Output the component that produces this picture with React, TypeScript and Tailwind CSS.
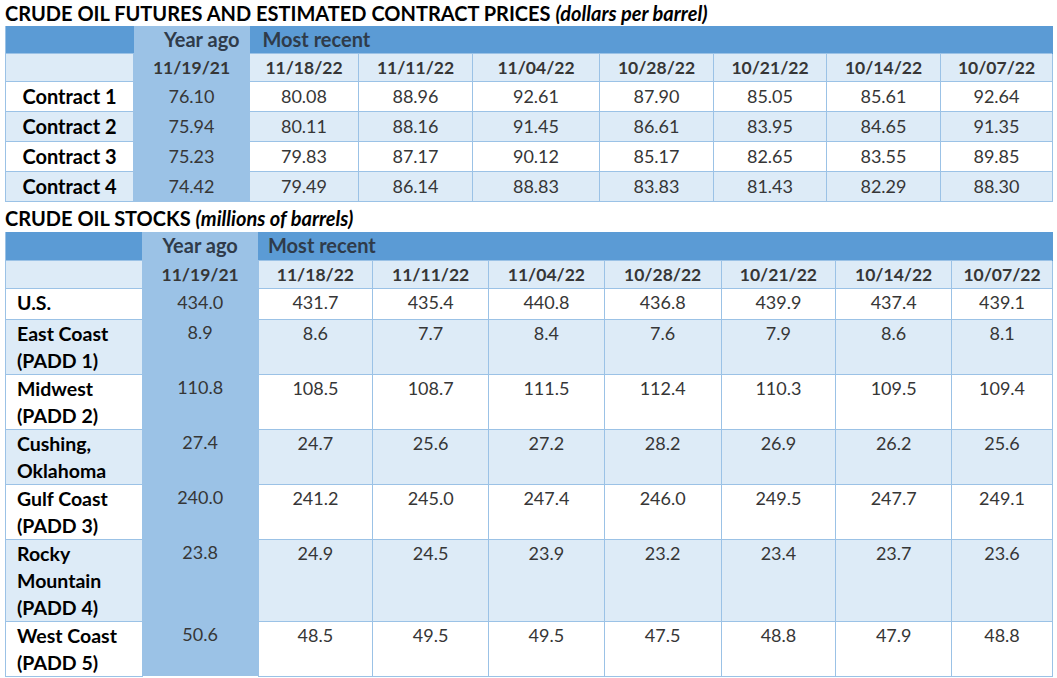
const futuresDates = ["11/18/22", "11/11/22", "11/04/22", "10/28/22", "10/21/22", "10/14/22", "10/07/22"];

const contracts = [
  { label: "Contract 1", ago: "76.10", values: ["80.08", "88.96", "92.61", "87.90", "85.05", "85.61", "92.64"] },
  { label: "Contract 2", ago: "75.94", values: ["80.11", "88.16", "91.45", "86.61", "83.95", "84.65", "91.35"] },
  { label: "Contract 3", ago: "75.23", values: ["79.83", "87.17", "90.12", "85.17", "82.65", "83.55", "89.85"] },
  { label: "Contract 4", ago: "74.42", values: ["79.49", "86.14", "88.83", "83.83", "81.43", "82.29", "88.30"] },
];

const stocks = [
  { label: ["U.S."], h: "h-[31px]", ago: "434.0", values: ["431.7", "435.4", "440.8", "436.8", "439.9", "437.4", "439.1"] },
  { label: ["East Coast", "(PADD 1)"], h: "h-[54px]", ago: "8.9", values: ["8.6", "7.7", "8.4", "7.6", "7.9", "8.6", "8.1"] },
  { label: ["Midwest", "(PADD 2)"], h: "h-[54px]", ago: "110.8", values: ["108.5", "108.7", "111.5", "112.4", "110.3", "109.5", "109.4"] },
  { label: ["Cushing,", "Oklahoma"], h: "h-[54px]", ago: "27.4", values: ["24.7", "25.6", "27.2", "28.2", "26.9", "26.2", "25.6"] },
  { label: ["Gulf Coast", "(PADD 3)"], h: "h-[54px]", ago: "240.0", values: ["241.2", "245.0", "247.4", "246.0", "249.5", "247.7", "249.1"] },
  { label: ["Rocky", "Mountain", "(PADD 4)"], h: "h-[81px]", ago: "23.8", values: ["24.9", "24.5", "23.9", "23.2", "23.4", "23.7", "23.6"] },
  { label: ["West Coast", "(PADD 5)"], h: "h-[54px]", ago: "50.6", values: ["48.5", "49.5", "49.5", "47.5", "48.8", "47.9", "48.8"] },
];

const futuresCols = ["w-[128px]", "w-[116px]", "w-[109px]", "w-[114px]", "w-[127px]", "w-[114px]", "w-[113px]", "w-[114px]", "w-[112px]"];
const stockCols = ["w-[137px]", "w-[116px]", "w-[115px]", "w-[116px]", "w-[116px]", "w-[117px]", "w-[115px]", "w-[116px]", "w-[101px]"];

const cell = "border border-[#9bc2e6] p-0";
const dateText = "text-[17.5px]";

export default function App() {
  return (
    <div className="w-[1057px] h-[678px] overflow-hidden bg-white pl-[5px] pr-[4px] font-['Lato','Liberation_Sans',sans-serif] text-[18px] leading-[27px] text-[#363636]">
      {/* Futures */}
      <div className="h-[26px] text-[20px] leading-[26px] font-bold text-black whitespace-nowrap">
        CRUDE OIL FUTURES AND ESTIMATED CONTRACT PRICES <i>(dollars per barrel)</i>
      </div>
      <table className="table-fixed border-collapse">
        <colgroup>
          {futuresCols.map((w, i) => (
            <col key={i} className={w} />
          ))}
        </colgroup>
        <tbody>
          <tr className="h-[27px] bg-[#5b9bd5] font-bold text-[20px] text-[#2f3b4a]">
            <td className="p-0 border-l border-[#9bc2e6]"></td>
            <td className="p-0 pr-[10px] text-right bg-[#9bc2e6]">Year ago</td>
            <td colSpan={7} className="p-0 pl-[13px] border-r border-[#5b9bd5]">Most recent</td>
          </tr>
          <tr className={`h-[28px] bg-[#ddebf7] font-bold ${dateText}`}>
            <td className={cell}></td>
            <td className={`${cell} text-center bg-[#9bc2e6]`}>11/19/21</td>
            {futuresDates.map((d) => (
              <td key={d} className={`${cell} text-center`}>{d}</td>
            ))}
          </tr>
          {contracts.map((c, i) => (
            <tr key={c.label} className={`h-[30px] ${i % 2 ? "bg-[#ddebf7]" : "bg-white"}`}>
              <td className={`${cell} text-center text-[20px] font-bold text-black`}>{c.label}</td>
              <td className={`${cell} text-center bg-[#9bc2e6]`}>{c.ago}</td>
              {c.values.map((v, j) => (
                <td key={j} className={`${cell} text-center`}>{v}</td>
              ))}
            </tr>
          ))}
        </tbody>
      </table>

      {/* Stocks */}
      <div className="h-[30px] pt-[3px] text-[20px] leading-[27px] font-bold text-black whitespace-nowrap">
        CRUDE OIL STOCKS <i>(millions of barrels)</i>
      </div>
      <table className="table-fixed border-collapse">
        <colgroup>
          {stockCols.map((w, i) => (
            <col key={i} className={w} />
          ))}
        </colgroup>
        <tbody>
          <tr className="h-[28px] bg-[#5b9bd5] font-bold text-[20px] text-[#2f3b4a]">
            <td className="p-0 border-l border-[#9bc2e6]"></td>
            <td className="p-0 text-center bg-[#9bc2e6]">Year ago</td>
            <td colSpan={7} className="p-0 pl-[10px] border-r border-[#5b9bd5]">Most recent</td>
          </tr>
          <tr className={`h-[28px] bg-[#ddebf7] font-bold ${dateText}`}>
            <td className={cell}></td>
            <td className="p-0 text-center bg-[#9bc2e6] border-y border-[#9bc2e6]">11/19/21</td>
            {futuresDates.map((d) => (
              <td key={d} className={`${cell} text-center`}>{d}</td>
            ))}
          </tr>
          {stocks.map((s, i) => (
            <tr key={s.ago} className={`${s.h} align-top ${i % 2 ? "bg-[#ddebf7]" : "bg-white"}`}>
              <td className={`${cell} pl-[11px] text-[19.5px] font-bold text-black`}>
                {s.label.map((l) => (
                  <div key={l}>{l}</div>
                ))}
              </td>
              <td className="p-0 text-center bg-[#9bc2e6]">{s.ago}</td>
              {s.values.map((v, j) => (
                <td key={j} className={`${cell} text-center`}>{v}</td>
              ))}
            </tr>
          ))}
        </tbody>
      </table>
    </div>
  );
}
